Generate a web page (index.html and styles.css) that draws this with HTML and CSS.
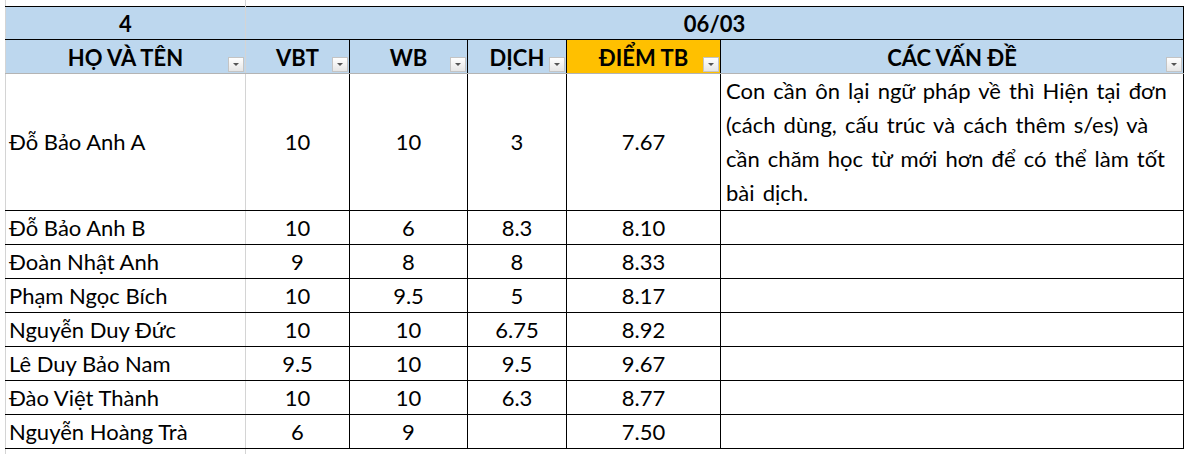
FILE: index.html
```html
<!DOCTYPE html>
<html lang="vi">
<head>
<meta charset="utf-8">
<title>Bảng điểm</title>
<link rel="stylesheet" href="styles.css">
</head>
<body>
<div class="sheet">
  <div class="strip top-strip"><div class="strip-a"></div><div class="strip-b"></div></div>
  <table class="grid">
    <colgroup>
      <col class="c-name"><col class="c-vbt"><col class="c-wb"><col class="c-dich"><col class="c-tb"><col class="c-note">
    </colgroup>
    <tr class="r-title">
      <th class="first gray-right">4</th>
      <th colspan="5" class="last">06/03</th>
    </tr>
    <tr class="r-head">
      <th class="first gray-right">HỌ VÀ TÊN<span class="filter"></span></th>
      <th>VBT<span class="filter"></span></th>
      <th>WB<span class="filter"></span></th>
      <th>DỊCH<span class="filter"></span></th>
      <th class="orange">ĐIỂM TB<span class="filter"></span></th>
      <th class="last">CÁC VẤN ĐỀ<span class="filter"></span></th>
    </tr>
    <tr class="r-tall">
      <td class="first gray-right name">Đỗ Bảo Anh A</td>
      <td>10</td><td>10</td><td>3</td><td>7.67</td>
      <td class="last note">Con cần ôn lại ngữ pháp về thì Hiện tại đơn<br>(cách dùng, cấu trúc và cách thêm s/es) và<br>cần chăm học từ mới hơn để có thể làm tốt<br>bài dịch.</td>
    </tr>
    <tr><td class="first gray-right name">Đỗ Bảo Anh B</td><td>10</td><td>6</td><td>8.3</td><td>8.10</td><td class="last"></td></tr>
    <tr><td class="first gray-right name">Đoàn Nhật Anh</td><td>9</td><td>8</td><td>8</td><td>8.33</td><td class="last"></td></tr>
    <tr><td class="first gray-right name">Phạm Ngọc Bích</td><td>10</td><td>9.5</td><td>5</td><td>8.17</td><td class="last"></td></tr>
    <tr><td class="first gray-right name">Nguyễn Duy Đức</td><td>10</td><td>10</td><td>6.75</td><td>8.92</td><td class="last"></td></tr>
    <tr><td class="first gray-right name">Lê Duy Bảo Nam</td><td>9.5</td><td>10</td><td>9.5</td><td>9.67</td><td class="last"></td></tr>
    <tr><td class="first gray-right name">Đào Việt Thành</td><td>10</td><td>10</td><td>6.3</td><td>8.77</td><td class="last"></td></tr>
    <tr><td class="first gray-right name">Nguyễn Hoàng Trà</td><td>6</td><td>9</td><td></td><td>7.50</td><td class="last"></td></tr>
  </table>
  <div class="strip bottom-strip"><div class="strip-a"></div><div class="strip-b"></div></div>
</div>
</body>
</html>
```
FILE: styles.css
```css
html, body {
  margin: 0;
  padding: 0;
  background: #ffffff;
}
body {
  width: 1186px;
  height: 454px;
  overflow: hidden;
  font-family: "Lato", "Open Sans", "Noto Sans", sans-serif;
  color: #000;
}
.sheet {
  padding-left: 5px;
}
.strip {
  display: flex;
  height: 6px;
}
.bottom-strip {
  height: 10px;
}
.strip-a {
  width: 239px;
  border-left: 1px solid #d4d4d4;
  border-right: 1px solid #d4d4d4;
}
.strip-b {
  flex: 1;
}
.grid {
  border-collapse: collapse;
  table-layout: fixed;
  width: 1178px;
  font-size: 22px;
}
.c-name { width: 240px; }
.c-vbt { width: 104px; }
.c-wb { width: 118px; }
.c-dich { width: 99px; }
.c-tb { width: 154px; }
.c-note { width: 463px; }

.grid th, .grid td {
  border: 1px solid #000;
  padding: 0 3px;
  text-align: center;
  vertical-align: middle;
  line-height: 24px;
  white-space: nowrap;
}
.grid th {
  background: #bdd7ee;
  font-weight: 700;
  position: relative;
}
.grid tr { height: 34px; }
.grid .r-title { height: 33px; }
.grid .r-tall { height: 135px; }

.grid .first { border-left-color: #d4d4d4; }
.grid .gray-right { border-right-color: #d4d4d4; }
.grid .r-head th { border-bottom-color: #b4b4b4; }
.grid .r-title th { padding-top: 2px; }
.grid .r-head th { padding-top: 2px; }
.grid th.orange { background: #ffc000; }
.grid td.name { text-align: left; padding-left: 3px; }
.grid td.note {
  text-align: left;
  vertical-align: top;
  line-height: 34px;
  padding-left: 5px;
  word-spacing: 2.5px;
}

.filter {
  position: absolute;
  right: 1px;
  bottom: 1px;
  width: 14px;
  height: 13px;
  border: 1px solid #c4c4c4;
  background: linear-gradient(#ffffff, #e6e6e6);
}
.filter::after {
  content: "";
  position: absolute;
  left: 4px;
  top: 5px;
  border-left: 3px solid transparent;
  border-right: 3px solid transparent;
  border-top: 3px solid #555;
}
```
